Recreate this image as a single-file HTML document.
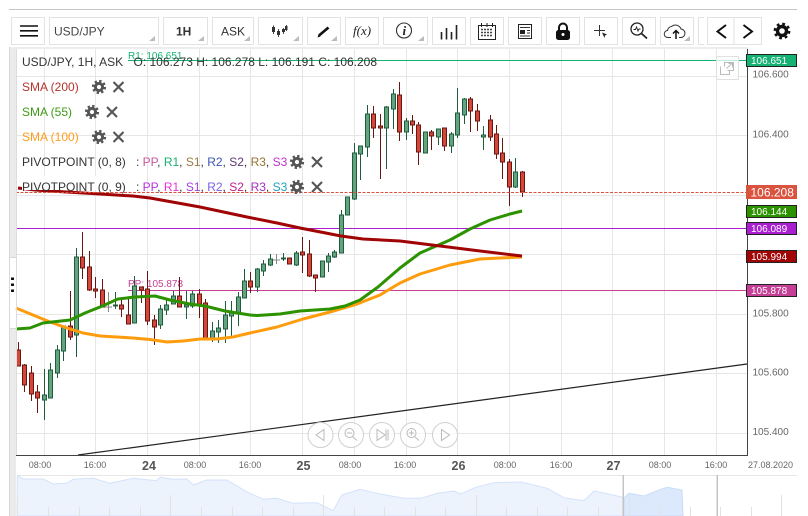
<!DOCTYPE html>
<html><head><meta charset="utf-8"><style>
html,body{margin:0;padding:0;background:#fff;width:808px;height:516px;overflow:hidden}
svg{position:absolute;left:0;top:0;display:block}
text{font-family:"Liberation Sans",sans-serif}
.b{fill:#fff;stroke:#e2e2e2;stroke-width:1}
.t{fill:#bbb}
.ax{font-size:9px;fill:#666;text-anchor:middle}
.d{font-size:12.5px;font-weight:bold;fill:#555;text-anchor:middle}
.y{font-size:10px;fill:#666}
.l{font-size:12px}
.v{font-size:10px;fill:#fff;font-weight:normal}
</style></head><body>
<svg width="808" height="516" viewBox="0 0 808 516" xmlns="http://www.w3.org/2000/svg">
<defs>
<g id="g"><circle r="3.6" fill="none" stroke="#555" stroke-width="3"/><circle r="5.8" fill="none" stroke="#555" stroke-width="2.6" stroke-dasharray="2.3 2.25"/></g>
<path id="x" d="M-5-5L5 5M5-5L-5 5" stroke="#555" stroke-width="2.1" fill="none"/>
</defs>
<path d="M9 9.5H797" stroke="#c4c4c4"/>
<!-- toolbar -->
<g>
<rect class="b" x="11.5" y="17.5" width="33" height="27"/>
<rect class="b" x="49.5" y="17.5" width="109" height="27"/>
<rect class="b" x="163.5" y="17.5" width="44" height="27"/>
<rect class="b" x="212.5" y="17.5" width="41" height="27"/>
<rect class="b" x="258.5" y="17.5" width="44" height="27"/>
<rect class="b" x="307.5" y="17.5" width="33" height="27"/>
<rect class="b" x="345.5" y="17.5" width="33" height="27"/>
<rect class="b" x="383.5" y="17.5" width="44" height="27"/>
<rect class="b" x="432.5" y="17.5" width="33" height="27"/>
<rect class="b" x="470.5" y="17.5" width="33" height="27"/>
<rect class="b" x="508.5" y="17.5" width="33" height="27"/>
<rect class="b" x="546.5" y="17.5" width="33" height="27"/>
<rect class="b" x="584.5" y="17.5" width="33" height="27"/>
<rect class="b" x="622.5" y="17.5" width="33" height="27"/>
<rect class="b" x="660.5" y="17.5" width="33" height="27"/>
<path d="M704 17.5H698.5V44.5H704" fill="#fff" stroke="#e2e2e2"/>
<rect class="b" x="707.5" y="17.5" width="54" height="27"/>
<path d="M734 18V44" stroke="#e2e2e2"/>
<path class="t" d="M155 36v5h-6zM204 36v5h-6zM250 36v5h-6zM299 36v5h-6zM337 36v5h-6zM424 36v5h-6zM690 36v5h-6z"/>
<path d="M20 26H38M20 30.8H38M20 35.8H38" stroke="#111" stroke-width="1.6"/>
<text x="54" y="35.5" font-size="12" fill="#444">USD/JPY</text>
<text x="176" y="35.5" font-size="12" font-weight="bold" fill="#333">1H</text>
<text x="221" y="35.5" font-size="12" fill="#333">ASK</text>
<path d="M273.500 25.500V34M278.500 29V37M283.500 28V34M286.500 25V31" stroke="#444" stroke-width="1" fill="none"/>
<path d="M272 27h3v5h-3zM277 31h3v4h-3zM282 29h3v3h-3zM285 26h2.500v4h-2.500z" fill="#333"/>
<path d="M319 35.500L328.500 27.500" stroke="#111" stroke-width="2.600"/><path d="M317.500 37.500L320.500 36.500L318.500 34.500z" fill="#111"/>
<text x="353" y="35" font-size="13" fill="#222" font-style="italic" style="font-family:'Liberation Serif',serif">f(x)</text>
<circle cx="404" cy="30.500" r="7.500" fill="none" stroke="#333" stroke-width="1.100"/>
<text x="402.500" y="35" font-size="13" font-weight="bold" font-style="italic" fill="#222" style="font-family:'Liberation Serif',serif">i</text>
<path d="M441.500 32V39.500M446.500 28V39.500M451.500 32V39.500M456.500 25V39.500" stroke="#222" stroke-width="1.600"/>
<rect x="478.500" y="25.500" width="17" height="14" fill="none" stroke="#222"/>
<path d="M481.500 23V27M487 23V27M492.500 23V27" stroke="#222"/>
<path d="M481 29.500H493M481 32.500H493M481 35.500H493" stroke="#444" stroke-width="1.400" stroke-dasharray="2 1"/>
<rect x="518.500" y="24.500" width="13" height="14" fill="none" stroke="#222"/>
<path d="M520 27.500H530M527 30.500H530M527 33H530M520 36H530" stroke="#333"/><rect x="520" y="30" width="5" height="4" fill="#222"/>
<path d="M559 31V27.500a4 4 0 0 1 8 0V31" fill="none" stroke="#111" stroke-width="2"/>
<rect x="556" y="30" width="14" height="10" rx="2.500" fill="#111"/><circle cx="563" cy="34.500" r="1.500" fill="#fff"/>
<path d="M594 30.500H605M599.500 25V36" stroke="#333"/><path d="M602 32.500L607 34.500L605 35.500L604.500 38z" fill="#222"/>
<circle cx="637" cy="29" r="6" fill="none" stroke="#222" stroke-width="1.300"/>
<path d="M641.500 33.500L647 38.500" stroke="#222" stroke-width="1.800"/>
<path d="M633.500 29.500H635.500L636.500 27L638 31L639 29H640.500" fill="none" stroke="#222" stroke-width=".9"/>
<path d="M671 37.500H668a3.500 3.500 0 0 1-.5-7a4.500 4.500 0 0 1 4-4a6 6 0 0 1 9.500 2.500a4.300 4.300 0 0 1 .5 8.500H679" fill="none" stroke="#333"/>
<path d="M676 39V31M673 33.500L676 30.500L679 33.500" fill="none" stroke="#111" stroke-width="1.500"/>
<path d="M726 25L717.500 31.500L726 38M743.500 25L752 31.500L743.500 38" fill="none" stroke="#111" stroke-width="2"/>
<circle cx="782" cy="31" r="4.500" fill="none" stroke="#111" stroke-width="3.400"/>
<circle cx="782" cy="31" r="7" fill="none" stroke="#111" stroke-width="2.800" stroke-dasharray="2.700 2.800"/>
</g>
<!-- left strip -->
<path d="M9.500 47V516" stroke="#d8d8d8"/><rect x="10" y="47" width="6" height="469" fill="#ebebeb"/>
<rect x="10" y="258" width="6" height="70" fill="#fff"/>
<path d="M10 257.500H16M10 328.500H16" stroke="#d8d8d8"/>
<path d="M11 277.500h3v2.500h-3zM11 283.500h3v2.500h-3zM11 289.500h3v2.500h-3z" fill="#111"/>
<!-- grid -->
<path d="M44.500 47V455M95.500 47V455M147.500 47V455M199.500 47V455M250.500 47V455M302.500 47V455M354.500 47V455M406.500 47V455M457.500 47V455M509.500 47V455M561.500 47V455M612.500 47V455M664.500 47V455M716.500 47V455M16 76.500H747M16 135.500H747M16 195.500H747M16 254.500H747M16 314.500H747M16 373.500H747M16 433.500H747" stroke="#e6e6e6" fill="none"/>
<!-- lines -->
<path d="M78 455L747 364" stroke="#222" stroke-width="1.200"/>
<path d="M128 60.500H747" stroke="#14b273" stroke-width="1"/>
<path d="M16 228.500H747" stroke="#a91fd0"/>
<path d="M128 290.500H747" stroke="#c43f95"/>
<text x="128" y="287" font-size="10" fill="#c43f95">PP: 105.878</text>
<text x="128" y="59" font-size="10" fill="#14b273">R1: 106.651</text>
<!-- candles -->
<path fill="none" stroke="#1f5c3e" d="M44.500 369V420M50.500 363V398M57.500 345V378M63.500 330V361M76.500 248V357M115.500 292V309M134.500 276V323M160.500 305V329M166.500 299V315M173.500 291V304M186.500 291V319M192.500 291V308M212.500 322V342M218.500 320V343M225.500 301V343M231.500 301V336M238.500 292V326M244.500 269V298M257.500 268V292M263.500 260V276M270.500 254V266M283.500 253V261M296.500 251V266M322.500 261V277M328.500 253V272M334.500 250V258M341.500 210V253M347.500 197V215M354.500 143V200M360.500 146V180M367.500 105V157M386.500 106V169M393.500 89V129M406.500 118V140M425.500 132V153M438.500 129V145M451.500 132V153M457.500 88V138M464.500 98V124M483.500 126V150M515.500 158V188"/>
<path fill="none" stroke="#6a1510" d="M18.500 342V366M24.500 364V392M31.500 366V401M37.500 385V413M70.500 291V340M82.500 232V279M89.500 251V291M95.500 277V298M102.500 279V307M121.500 299V317M128.500 297V324M141.500 287V303M147.500 271V325M154.500 315V345M179.500 277V307M199.500 289V318M205.500 299V340M250.500 272V293M302.500 237V273M309.500 240V277M315.500 275V292M373.500 106V138M380.500 114V179M399.500 82V141M412.500 115V134M418.500 122V165M431.500 130V150M444.500 128V151M470.500 97V132M477.500 104V131M490.500 115V141M496.500 125V159M502.500 138V179M509.500 159V206M522.500 171V197"/>
<path fill="#63a37e" stroke="#1f5c3e" d="M42.500 395h4v5h-4zM48.500 370h4v28h-4zM55.500 350h4v23h-4zM61.500 326h4v25h-4zM74.500 257h4v78h-4zM113.500 305h4v1h-4zM132.500 286h4v37h-4zM158.500 309h4v16h-4zM164.500 305h4v5h-4zM171.500 296h4v8h-4zM184.500 305h4v2h-4zM190.500 294h4v12h-4zM210.500 331h4v9h-4zM216.500 328h4v4h-4zM223.500 315h4v14h-4zM229.500 313h4v3h-4zM236.500 297h4v17h-4zM242.500 281h4v17h-4zM255.500 269h4v18h-4zM261.500 264h4v7h-4zM268.500 259h4v6h-4zM281.500 258h4v1h-4zM294.500 253h4v12h-4zM320.500 261h4v16h-4zM326.500 256h4v6h-4zM332.500 252h4v5h-4zM339.500 215h4v38h-4zM345.500 197h4v18h-4zM352.500 153h4v46h-4zM358.500 146h4v8h-4zM365.500 114h4v33h-4zM384.500 107h4v21h-4zM391.500 94h4v15h-4zM404.500 121h4v11h-4zM423.500 132h4v21h-4zM436.500 129h4v8h-4zM449.500 134h4v12h-4zM455.500 113h4v22h-4zM462.500 99h4v16h-4zM481.500 135h4v2h-4zM513.500 172h4v15h-4z"/>
<path fill="#d2473a" stroke="#6a1510" d="M16.500 350h4v16h-4zM22.500 365h4v20h-4zM29.500 373h4v21h-4zM35.500 392h4v6h-4zM68.500 326h4v11h-4zM80.500 257h4v11h-4zM87.500 267h4v23h-4zM93.500 289h4v2h-4zM100.500 290h4v17h-4zM119.500 305h4v4h-4zM126.500 315h4v9h-4zM139.500 287h4v3h-4zM145.500 289h4v32h-4zM152.500 320h4v7h-4zM177.500 296h4v11h-4zM197.500 294h4v10h-4zM203.500 303h4v36h-4zM248.500 281h4v6h-4zM287.500 258h4v6h-4zM300.500 252h4v3h-4zM307.500 254h4v22h-4zM313.500 275h4v3h-4zM371.500 114h4v14h-4zM378.500 126h4v2h-4zM397.500 95h4v37h-4zM410.500 121h4v4h-4zM416.500 125h4v27h-4zM429.500 132h4v4h-4zM442.500 128h4v18h-4zM468.500 99h4v12h-4zM475.500 111h4v10h-4zM488.500 120h4v17h-4zM494.500 134h4v20h-4zM500.500 153h4v9h-4zM507.500 162h4v25h-4zM520.500 172h4v20h-4z"/>
<path d="M108.500 292V312M105 307H112M276.500 254V264M273 260H280" stroke="#888" fill="none"/>
<!-- SMAs -->
<path fill="none" stroke="#ff9c0e" stroke-width="3" stroke-linejoin="round" d="M16 308L33 315L50 322L67 328L83 333L100 336L117 337L133 338L150 339.500L167 342L183 341L200 339L217 339L233 337L250 333L277 327L303 319L330 312L357 304L380 295L400 283L420 274L450 265L480 259L500 258L522 257"/>
<path fill="none" stroke="#2d9200" stroke-width="3" stroke-linejoin="round" d="M16 329L30 328L43 323L70 320L85 313L100 307L118 299L135 297L155 296L170 300L190 304L205 306L225 311L250 315L257 315.500L280 314L300 311L330 309L345 306L360 300L378 287L400 268L420 253L450 240L470 229L490 220L510 214L522 211"/>
<path fill="none" stroke="#a00404" stroke-width="3" stroke-linejoin="round" d="M18 188L35 190L50 191L100 194L133 196L150 198L200 207L247 217L277 223L300 228L341 236L363 239L400 241L440 246L480 251L522 256"/>
<rect x="22" y="176" width="108" height="14" fill="#fff"/>
<!-- red dashed -->
<path d="M16 192.500H747" stroke="#d9533f" stroke-dasharray="3 1.500"/>
<!-- axes -->
<path d="M16.500 47V455" fill="none" stroke="#dcdcdc"/>
<path d="M16 455.500H747.500V47" fill="none" stroke="#444" stroke-width="1"/>
<rect x="10" y="47" width="738" height="2" fill="#ededed"/>
<g class="y"><text x="752.500" y="77.500" class="y">106.600</text><text x="752.500" y="137.500" class="y">106.400</text><text x="752.500" y="316.500" class="y">105.800</text><text x="752.500" y="375.500" class="y">105.600</text><text x="752.500" y="435" class="y">105.400</text></g>
<rect x="746.500" y="54.500" width="50" height="12" fill="#14b273" stroke="#222"/><text x="751" y="64" class="v" font-weight="bold">106.651</text>
<rect x="746" y="185" width="51" height="14" fill="#d9533f"/><text x="750.500" y="196.500" font-size="12" fill="#fff">106.208</text>
<rect x="746.500" y="205.500" width="50" height="12" fill="#2d9200" stroke="#222"/><text x="751" y="215" class="v">106.144</text>
<rect x="746.500" y="222.500" width="50" height="12" fill="#a91fd0" stroke="#222"/><text x="751" y="232" class="v">106.089</text>
<rect x="746.500" y="250.500" width="50" height="12" fill="#a00404" stroke="#222"/><text x="751" y="260" class="v">105.994</text>
<rect x="746.500" y="284.500" width="50" height="12" fill="#c43f95" stroke="#222"/><text x="751" y="294" class="v">105.878</text>
<!-- legend -->
<g class="l">
<text x="22" y="66" fill="#333">USD/JPY, 1H, ASK</text>
<text x="133.500" y="66" fill="#333">O: 106.273 H: 106.278 L: 106.191 C: 106.208</text>
<text x="22" y="91" fill="#b5322a">SMA (200)</text>
<text x="22" y="116" fill="#3f9a14">SMA (55)</text>
<text x="22" y="141" fill="#ff9c1a">SMA (100)</text>
<text x="22" y="166" fill="#333">PIVOTPOINT (0, 8)</text>
<text x="22" y="191" fill="#333">PIVOTPOINT (0, 9)</text>
<text x="136" y="166" fill="#333">: <tspan fill="#c9559f">PP</tspan>, <tspan fill="#14b273">R1</tspan>, <tspan fill="#9a7a45">S1</tspan>, <tspan fill="#3f55b5">R2</tspan>, <tspan fill="#5a3a6a">S2</tspan>, <tspan fill="#9a7030">R3</tspan>, <tspan fill="#c030d0">S3</tspan></text>
<text x="136" y="191" fill="#333">: <tspan fill="#b830e0">PP</tspan>, <tspan fill="#f030e0">R1</tspan>, <tspan fill="#a040e0">S1</tspan>, <tspan fill="#7a60e0">R2</tspan>, <tspan fill="#c02090">S2</tspan>, <tspan fill="#a030c0">R3</tspan>, <tspan fill="#20a0c0">S3</tspan></text>
</g>
<use href="#g" x="99" y="87"/><use href="#x" x="118.500" y="87"/>
<use href="#g" x="92" y="112"/><use href="#x" x="112" y="112"/>
<use href="#g" x="99" y="137"/><use href="#x" x="118.500" y="137"/>
<use href="#g" x="297" y="162"/><use href="#x" x="317" y="162"/>
<use href="#g" x="297" y="187"/><use href="#x" x="317" y="187"/>
<!-- popout -->
<rect x="716.500" y="56.500" width="22" height="23" fill="#fff" fill-opacity=".75" stroke="#e0e0e0"/>
<path d="M720.500 66.500V74.500H729.500V70.500M724.500 66.500V62.500H733.500V70.500H727.500M726.500 68.500L732 63.500M728.500 63.500H732.500V67.500" fill="none" stroke="#bbb"/>
<!-- nav buttons -->
<g fill="#fff" fill-opacity=".7" stroke="#d0d0d0"><circle cx="320.500" cy="435" r="12.500"/><circle cx="351" cy="435" r="12.500"/><circle cx="382" cy="435" r="12.500"/><circle cx="413" cy="435" r="12.500"/><circle cx="445" cy="435" r="12.500"/></g>
<g fill="none" stroke="#bbb"><path d="M324 429.500V440.500L316 435z"/><path d="M377 429.500V440.500L385 435zM386 429.500V440.500M388 429.500V440.500"/><path d="M441.500 429.500V440.500L449.500 435z"/><circle cx="349.500" cy="433" r="4.500"/><path d="M352.500 436.500L357 440.500M347 433H352"/><circle cx="411.500" cy="433" r="4.500"/><path d="M414.500 436.500L419 440.500M409 433H414M411.500 430.500V435.500"/></g>
<!-- axis labels -->
<text class="ax" x="40" y="468">08:00</text><text class="ax" x="95" y="468">16:00</text><text class="d" x="149" y="470">24</text>
<text class="ax" x="195" y="468">08:00</text><text class="ax" x="250" y="468">16:00</text><text class="d" x="303.500" y="470">25</text>
<text class="ax" x="350" y="468">08:00</text><text class="ax" x="405" y="468">16:00</text><text class="d" x="458.500" y="470">26</text>
<text class="ax" x="505" y="468">08:00</text><text class="ax" x="561" y="468">16:00</text><text class="d" x="613.500" y="470">27</text>
<text class="ax" x="660" y="468">08:00</text><text class="ax" x="716" y="468">16:00</text><text class="ax" x="770.500" y="468">27.08.2020</text>
<!-- navigator -->
<path d="M17 475.500H797" stroke="#e6e6e6"/>
<path fill="#edf3fd" stroke="#d3e2fa" d="M17.300 476L23.300 479L43.300 479L53.300 484L66.700 483.300L73.300 479.300L93.300 478.300L110 483.300L133.300 478.300L156.700 480.700L160 477.300L173.300 479.300L186.700 479L193.300 485L206.700 480L226.700 480L246.700 491.700L263.300 499.300L276.700 498.300L293.300 503.300L316.700 502.700L333.300 510.700L341.700 495L360 489.300L376.700 493.300L404 498.300L420.700 498.300L437.300 493.300L454 491L460.700 494L475.700 487.300L494 482.700L520.700 482L547.300 488.300L564 497.700L584 500.700L594 491L620.700 496.700L623 498V516H17z"/>
<path fill="#dce9fc" stroke="#c8dcfa" d="M624 498L629 493.300L644 496L660.700 489.300L667.300 487.300L682 490L683 516H624z"/>
<path fill="none" stroke="#e2e2e2" d="M17.500 495V516M48.500 507V516M79.500 507V516M109.500 507V516M140.500 507V516M170.500 495V516M201.500 507V516M232.500 507V516M262.500 507V516M293.500 507V516M323.500 495V516M354.500 507V516M384.500 507V516M415.500 507V516M445.500 507V516M476.500 495V516M506.500 507V516M537.500 507V516M567.500 507V516M598.500 507V516M629.500 495V516M659.500 507V516M690.500 507V516M720.500 507V516M751.500 507V516M781.500 495V516"/>
<rect x="622.500" y="475" width="1.500" height="41" fill="#c4c4c4"/><rect x="716.500" y="475" width="1.500" height="41" fill="#c4c4c4"/>
</svg>
</body></html>
